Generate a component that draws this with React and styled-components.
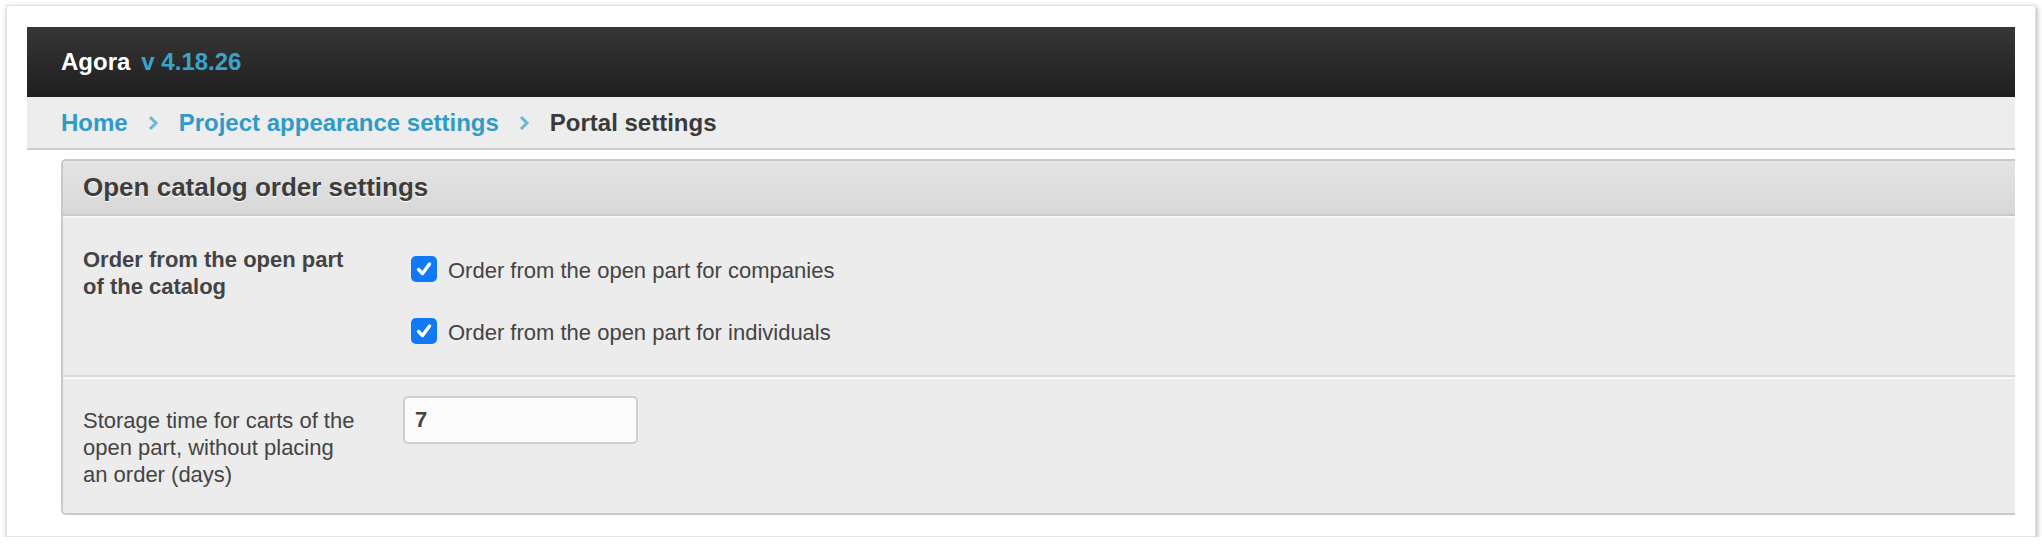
import React, { useState } from 'react';
import styled, { createGlobalStyle } from 'styled-components';

const colors = {
  link: '#2f9bc6',
  chevron: '#6fb6d6',
  text: '#444444',
  border: '#c9c9c9',
  rowBg: '#ececec',
  check: '#1179f6',
};

const GlobalStyle = createGlobalStyle`
  body {
    margin: 0;
    background: #ffffff;
    font-family: "Liberation Sans", Arial, Helvetica, sans-serif;
  }
`;

const Frame = styled.div`
  margin: 5px 6px 0;
  height: 532px;
  box-sizing: border-box;
  padding: 21px 20px 23px;
  background: #fff;
  border: 1px solid #e2e2e2;
  box-shadow: 1px 2px 5px rgba(0, 0, 0, 0.32);
  overflow: hidden;
`;

const TopBar = styled.header`
  height: 70px;
  display: flex;
  align-items: center;
  gap: 11px;
  padding-left: 34px;
  background: linear-gradient(#363636, #1f1f1f);
  font-size: 24px;
  font-weight: bold;
  .brand {
    color: #fff;
  }
  .version {
    color: #3ba3cb;
  }
`;

const Crumbs = styled.nav`
  height: 51px;
  display: flex;
  align-items: center;
  gap: 20px;
  padding-left: 34px;
  background: #ededed;
  border-bottom: 2px solid #cdcdcd;
  font-size: 24px;
  font-weight: bold;
  a {
    color: ${colors.link};
    text-decoration: none;
  }
  .current {
    color: #3a3a3a;
  }
`;

const Panel = styled.section`
  margin: 9px 0 0 34px;
  border: 2px solid ${colors.border};
  border-right: none;
  border-radius: 5px 0 0 5px;
  overflow: hidden;
`;

const PanelHead = styled.h3`
  margin: 0;
  height: 53px;
  display: flex;
  align-items: center;
  padding-left: 20px;
  background: linear-gradient(#e4e4e4, #d8d8d8);
  border-bottom: 2px solid ${colors.border};
  color: #3d3d3d;
  font-size: 26px;
  font-weight: bold;
  text-shadow: 0 1px 0 #fff;
`;

const Row = styled.div`
  display: grid;
  grid-template-columns: 320px 1fr;
  padding: 17px 0 25px 20px;
  background: ${colors.rowBg};
  border-top: 2px solid #f9f9f9;
  border-bottom: 2px solid ${(p) => (p.last ? '#c9c9c9' : '#dadada')};
  &:last-child {
    border-bottom: none;
  }
`;

const Label = styled.div`
  width: 278px;
  margin-top: 11px;
  font-size: 22px;
  line-height: 27px;
  color: ${colors.text};
  font-weight: ${(p) => (p.bold ? 'bold' : 'normal')};
`;

const Options = styled.div`
  display: flex;
  flex-direction: column;
  gap: 21px;
  padding-top: 15px;
  margin-bottom: -3px;
`;

const Option = styled.label`
  height: 41px;
  display: flex;
  align-items: center;
  gap: 11px;
  padding-left: 8px;
  font-size: 22px;
  color: ${colors.text};
  cursor: pointer;
  input {
    display: none;
  }
`;

const Box = styled.span`
  width: 26px;
  height: 26px;
  margin-top: -4px;
  box-sizing: border-box;
  border-radius: 5px;
  display: flex;
  align-items: center;
  justify-content: center;
  background: ${(p) => (p.checked ? colors.check : '#fff')};
  border: ${(p) => (p.checked ? 'none' : '1px solid #999')};
`;

const NumberInput = styled.input`
  width: 235px;
  height: 48px;
  box-sizing: border-box;
  padding: 0 10px;
  border: 2px solid #cfcfcf;
  border-radius: 5px;
  background: #fbfbfb;
  font-family: inherit;
  font-size: 22px;
  font-weight: bold;
  color: ${colors.text};
  outline: none;
`;

const Chevron = () => (
  <svg width="11" height="16" viewBox="0 0 11 16">
    <polyline points="2,2 8,8 2,14" fill="none" stroke={colors.chevron} strokeWidth="3" />
  </svg>
);

const Checkbox = ({ label, checked, onChange }) => (
  <Option>
    <input type="checkbox" checked={checked} onChange={onChange} />
    <Box checked={checked}>
      {checked && (
        <svg width="18" height="18" viewBox="0 0 18 18">
          <polyline points="3.5,9.5 7.5,13.5 14.5,4" fill="none" stroke="#fff" strokeWidth="3.4" strokeLinecap="round" strokeLinejoin="round" />
        </svg>
      )}
    </Box>
    {label}
  </Option>
);

const App = () => {
  const [companies, setCompanies] = useState(true);
  const [individuals, setIndividuals] = useState(true);
  const [days, setDays] = useState('7');

  return (
    <>
      <GlobalStyle />
      <Frame>
        <TopBar>
          <span className="brand">Agora</span>
          <span className="version">v 4.18.26</span>
        </TopBar>
        <Crumbs>
          <a href="#home">Home</a>
          <Chevron />
          <a href="#appearance">Project appearance settings</a>
          <Chevron />
          <span className="current">Portal settings</span>
        </Crumbs>
        <Panel>
          <PanelHead>Open catalog order settings</PanelHead>
          <Row>
            <Label bold>Order from the open part of the catalog</Label>
            <Options>
              <Checkbox
                label="Order from the open part for companies"
                checked={companies}
                onChange={() => setCompanies(!companies)}
              />
              <Checkbox
                label="Order from the open part for individuals"
                checked={individuals}
                onChange={() => setIndividuals(!individuals)}
              />
            </Options>
          </Row>
          <Row last>
            <Label>Storage time for carts of the open part, without placing an order (days)</Label>
            <div>
              <NumberInput value={days} onChange={(e) => setDays(e.target.value)} />
            </div>
          </Row>
        </Panel>
      </Frame>
    </>
  );
};

export default App;
